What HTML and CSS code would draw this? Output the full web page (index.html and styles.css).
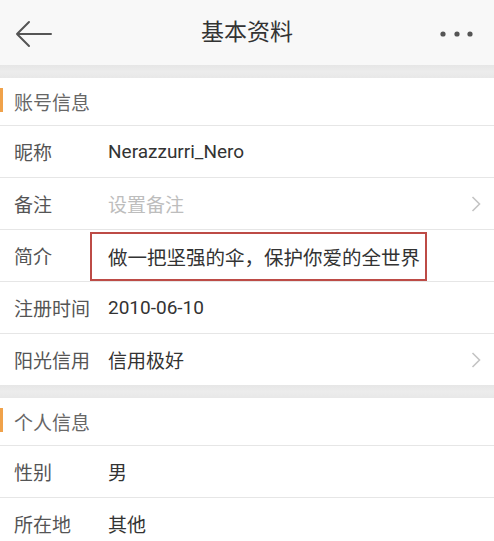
FILE: index.html
```html
<!DOCTYPE html>
<html lang="zh-CN">
<head>
<meta charset="utf-8">
<title>基本资料</title>
<link rel="stylesheet" href="styles.css">
</head>
<body>
<div class="page">
  <header class="topbar">
    <svg class="back" width="40" height="30" viewBox="0 0 40 30">
      <path d="M2 14 H36 M14 2 L2 14 L14 26" fill="none" stroke="#555" stroke-width="2" stroke-linecap="round" stroke-linejoin="round"/>
    </svg>
    <div class="title">基本资料</div>
    <svg class="more" width="34" height="8" viewBox="0 0 34 8">
      <circle cx="3" cy="4" r="2.6" fill="#555"/>
      <circle cx="17" cy="4" r="2.6" fill="#555"/>
      <circle cx="30" cy="4" r="2.6" fill="#555"/>
    </svg>
  </header>

  <div class="gap"></div>

  <section class="group">
    <div class="group-head"><span class="accent"></span>账号信息</div>
    <div class="row"><span class="label">昵称</span><span class="value latin">Nerazzurri_Nero</span></div>
    <div class="row"><span class="label">备注</span><span class="value placeholder">设置备注</span>
      <svg class="chev" width="10" height="16" viewBox="0 0 10 16"><path d="M1.5 1 L8.5 8 L1.5 15" fill="none" stroke="#c4c4c4" stroke-width="1.6"/></svg>
    </div>
    <div class="row"><span class="label">简介</span><span class="value boxed">做一把坚强的伞，保护你爱的全世界</span></div>
    <div class="row"><span class="label">注册时间</span><span class="value latin">2010-06-10</span></div>
    <div class="row last"><span class="label">阳光信用</span><span class="value">信用极好</span>
      <svg class="chev" width="10" height="16" viewBox="0 0 10 16"><path d="M1.5 1 L8.5 8 L1.5 15" fill="none" stroke="#c4c4c4" stroke-width="1.6"/></svg>
    </div>
  </section>

  <div class="gap"></div>

  <section class="group">
    <div class="group-head"><span class="accent"></span>个人信息</div>
    <div class="row"><span class="label">性别</span><span class="value">男</span></div>
    <div class="row last"><span class="label">所在地</span><span class="value">其他</span></div>
  </section>
</div>
</body>
</html>
```

FILE: styles.css
```css
* { box-sizing: border-box; }
html, body {
  margin: 0;
  padding: 0;
  background: #ffffff;
}
body {
  font-family: Roboto, "Noto Sans CJK SC", "Noto Sans", sans-serif;
  color: #333;
  width: 494px;
  overflow: hidden;
}
.page {
  display: flex;
  flex-direction: column;
}
.topbar {
  height: 65px;
  background: #f8f8f8;
  display: flex;
  align-items: center;
  justify-content: space-between;
  padding: 0 20px 0 15px;
  position: relative;
}
.back { display: block; margin-top: 4px; }
.more { display: block; margin-top: 3px; }
.title {
  position: absolute;
  left: 0;
  right: 0;
  text-align: center;
  font-size: 23px;
  color: #333;
  line-height: 65px;
  pointer-events: none;
}
.gap {
  height: 13px;
  background: linear-gradient(#e6e6e6, #ececec 50%, #e8e8e8);
}
.group { background: #fff; }
.group-head {
  height: 48px;
  display: flex;
  align-items: center;
  padding-left: 14px;
  font-size: 19px;
  color: #666;
  border-bottom: 1px solid #e6e6e6;
  position: relative;
}
.accent {
  position: absolute;
  left: 0;
  top: 10px;
  width: 3px;
  height: 24px;
  background: #f0a24a;
}
.row {
  height: 52px;
  display: flex;
  align-items: center;
  padding-left: 14px;
  padding-right: 13px;
  border-bottom: 1px solid #e6e6e6;
  font-size: 19px;
}
.row.last { border-bottom: none; height: 51px; }
.label {
  width: 94px;
  flex: none;
  color: #555;
}
.value {
  flex: 1;
  color: #333;
}
.latin { font-size: 19px; }
.placeholder { color: #bdbdbd; }
.boxed {
  flex: none;
  align-self: stretch;
  margin: 2px 0 0 -18px;
  padding: 0 5px 0 16px;
  border: 2.5px solid #bd4b46;
  display: flex;
  align-items: center;
  font-size: 19.5px;
}
.chev { display: block; flex: none; }
```
